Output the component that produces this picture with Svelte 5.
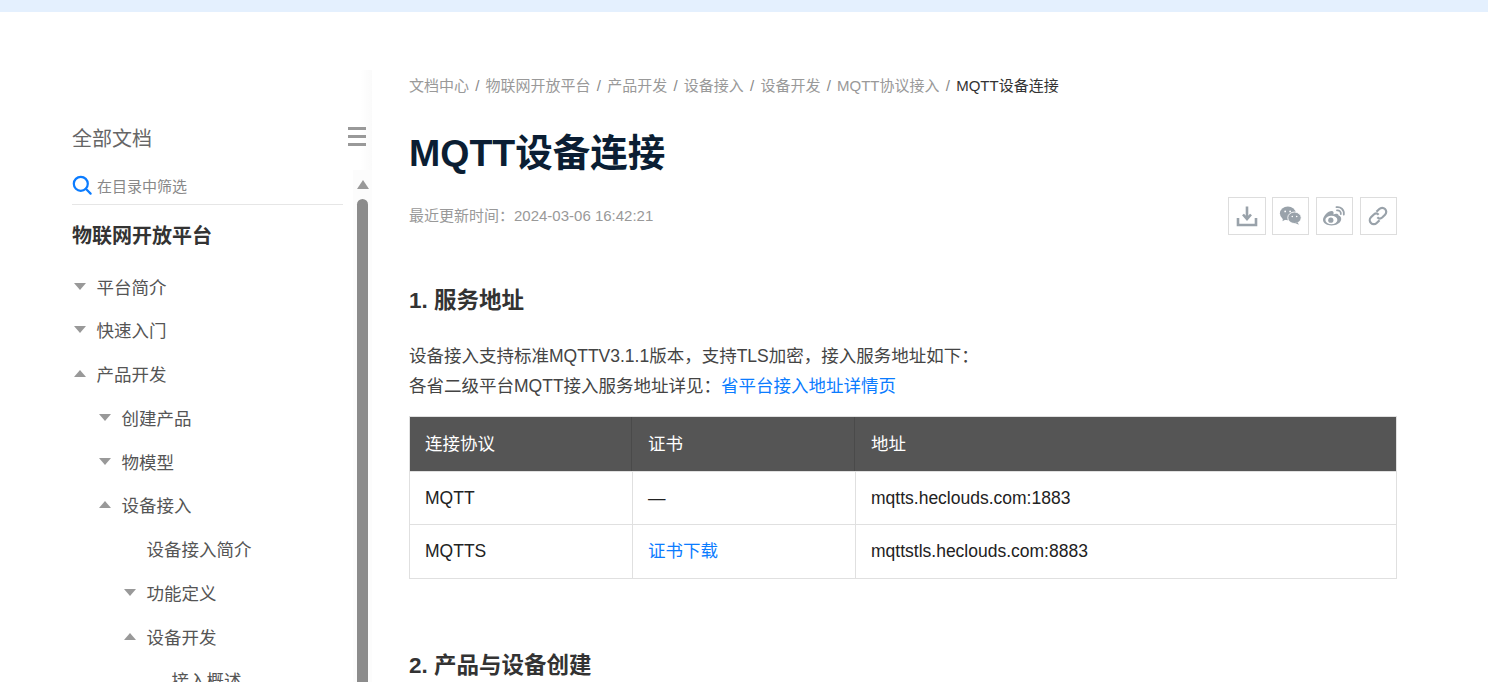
<script lang="ts">
  // sidebar tree: depth drives the indent, open = null means a leaf
  const tree = [
    { label: '平台简介', depth: 0, open: false },
    { label: '快速入门', depth: 0, open: false },
    { label: '产品开发', depth: 0, open: true },
    { label: '创建产品', depth: 1, open: false },
    { label: '物模型', depth: 1, open: false },
    { label: '设备接入', depth: 1, open: true },
    { label: '设备接入简介', depth: 2, open: null },
    { label: '功能定义', depth: 2, open: false },
    { label: '设备开发', depth: 2, open: true },
    { label: '接入概述', depth: 3, open: null }
  ];

  const crumbs = ['文档中心', '物联网开放平台', '产品开发', '设备接入', '设备开发', 'MQTT协议接入'];
</script>

<div class="topbar"></div>

<div class="page">
  <aside class="sidebar">
    <div class="side-head">
      <span class="side-title">全部文档</span>
      <span class="menu-icon"><i></i><i></i><i></i></span>
    </div>
    <div class="side-body">
      <div class="side-content">
        <div class="search">
          <svg width="20" height="20" viewBox="0 0 20 20" fill="none" stroke="#0b7cff" stroke-width="2.2">
            <circle cx="8.8" cy="8.8" r="7" />
            <path d="M13.8 13.8 L18.6 18.6" stroke-linecap="round" />
          </svg>
          <span>在目录中筛选</span>
        </div>
        <div class="platform">物联网开放平台</div>
        <ul class="tree">
          {#each tree as item}
            <li style="padding-left: {item.depth * 25}px">
              {#if item.open !== null}
                <span class="arrow" class:up={item.open}></span>
              {:else}
                <span class="arrow blank"></span>
              {/if}
              {item.label}
            </li>
          {/each}
        </ul>
      </div>
      <div class="scroll">
        <span class="scroll-up"></span>
        <span class="scroll-thumb"></span>
      </div>
    </div>
  </aside>

  <main class="content">
    <nav class="crumbs">
      {#each crumbs as c}
        <span>{c}</span><span class="sep">/</span>
      {/each}
      <span class="current">MQTT设备连接</span>
    </nav>

    <h1>MQTT设备连接</h1>

    <div class="meta">
      <span class="updated">最近更新时间：2024-03-06 16:42:21</span>
      <div class="actions">
        <button aria-label="下载">
          <svg width="22" height="22" viewBox="0 0 22 22" fill="none" stroke="#99a2aa" stroke-width="2.6">
            <path d="M11 1.5 V14 M7 9.5 L11 14 L15 9.5" />
            <path d="M2 13 V20 H20 V13" />
          </svg>
        </button>
        <button aria-label="微信">
          <svg width="23" height="20" viewBox="0 0 26 22" fill="#99a2aa">
            <ellipse cx="10" cy="8" rx="9" ry="7.8" />
            <path d="M4.5 13 L4 17 L9 14 Z" />
            <ellipse cx="17.5" cy="13" rx="7.6" ry="6.5" stroke="#fff" stroke-width="1" />
            <path d="M21 18 L22.5 21 L18 19 Z" />
            <circle cx="7" cy="5.8" r="1" fill="#fff" />
            <circle cx="12.6" cy="5.8" r="1" fill="#fff" />
            <circle cx="15" cy="11.5" r="0.9" fill="#fff" />
            <circle cx="20" cy="11.5" r="0.9" fill="#fff" />
          </svg>
        </button>
        <button aria-label="微博">
          <svg width="24" height="22" viewBox="0 0 24 22" fill="#99a2aa">
            <path d="M9.5 20.5 C4.5 20.5 1 18 1 14.8 C1 11.2 6 6 9.6 6 C11.6 6 11.9 7.6 11.4 9.4 C13.8 8.4 16.6 8.6 16.6 10.6 C18.4 11.2 19.2 12.4 19.2 14 C19.2 17.6 14.6 20.5 9.5 20.5 Z" />
            <ellipse cx="9.4" cy="15" rx="6" ry="4.2" fill="#fff" />
            <circle cx="8.8" cy="15.2" r="2.6" />
            <path d="M14.5 2.2 C18.5 1.4 22.5 4.6 21.8 9.6 M15 5.4 C17 5 19.2 6.6 18.8 9" fill="none" stroke="#99a2aa" stroke-width="1.8" stroke-linecap="round" />
          </svg>
        </button>
        <button aria-label="复制链接">
          <svg width="22" height="22" viewBox="0 0 20 20" fill="none" stroke="#99a2aa" stroke-width="2">
            <path d="M8.6 6.2 L11.2 3.6 A3.2 3.2 0 0 1 16.4 8.8 L13.8 11.4 A3.2 3.2 0 0 1 9.4 11.2" />
            <path d="M11.4 13.8 L8.8 16.4 A3.2 3.2 0 0 1 3.6 11.2 L6.2 8.6 A3.2 3.2 0 0 1 10.6 8.8" />
          </svg>
        </button>
      </div>
    </div>

    <h2>1. 服务地址</h2>
    <p>
      设备接入支持标准MQTTV3.1.1版本，支持TLS加密，接入服务地址如下：<br />
      各省二级平台MQTT接入服务地址详见：<a href="#top">省平台接入地址详情页</a>
    </p>

    <table>
      <thead>
        <tr><th>连接协议</th><th>证书</th><th>地址</th></tr>
      </thead>
      <tbody>
        <tr><td>MQTT</td><td>—</td><td>mqtts.heclouds.com:1883</td></tr>
        <tr class="last"><td>MQTTS</td><td><a href="#top">证书下载</a></td><td>mqttstls.heclouds.com:8883</td></tr>
      </tbody>
    </table>

    <h2 class="second">2. 产品与设备创建</h2>
  </main>
</div>

<style>
  :global(html), :global(body) {
    margin: 0;
    height: 682px;
    overflow: hidden;
    background: #fff;
  }

  .topbar {
    height: 12px;
    background: #e4f0fe;
  }

  .page {
    display: flex;
    height: 670px;
    overflow: hidden;
    font-family: "Liberation Sans", "Noto Sans CJK SC", sans-serif;
    color: #333;
  }

  /* Sidebar */
  .sidebar {
    flex: none;
    width: 372px;
    box-sizing: border-box;
    padding: 58px 0 0 72px;
  }

  .side-head {
    display: flex;
    justify-content: space-between;
    align-items: center;
    height: 100px;
    padding: 0 6px 0 0;
    background: linear-gradient(to right, rgba(0, 0, 0, 0) 288px, rgba(0, 0, 0, 0.018) 300px);
  }

  .side-title {
    font-size: 20px;
    color: #666;
    padding-top: 34px;
  }

  .menu-icon {
    display: flex;
    flex-direction: column;
    gap: 5px;
    width: 18px;
    margin-top: 33px;
  }

  .menu-icon i {
    display: block;
    height: 3px;
    background: #999;
  }

  .side-body {
    display: flex;
    justify-content: space-between;
  }

  .side-content {
    width: 271px;
  }

  .search {
    display: flex;
    align-items: center;
    gap: 5px;
    height: 44px;
    margin-top: -10px;
    border-bottom: 1px solid #e6e6e6;
    font-size: 15px;
    color: #888;
  }

  .search svg {
    margin-top: 5px;
  }

  .search span {
    padding-top: 6px;
  }

  .platform {
    margin-top: 17px;
    font-size: 20px;
    line-height: 28px;
    font-weight: 700;
    color: #333;
  }

  .tree {
    list-style: none;
    margin: 14.25px 0 0;
    padding: 0;
  }

  .tree li {
    display: flex;
    align-items: center;
    height: 43.75px;
    font-size: 17.5px;
    color: #555;
  }

  .arrow {
    flex: none;
    width: 0;
    height: 0;
    margin: 0 10.5px 0 2px;
    border-left: 6.5px solid transparent;
    border-right: 6.5px solid transparent;
    border-top: 7px solid #999;
  }

  .arrow.up {
    border-top: none;
    border-bottom: 7px solid #999;
  }

  .arrow.blank {
    border-color: transparent;
  }

  .scroll {
    flex: none;
    width: 19px;
    display: flex;
    flex-direction: column;
    align-items: center;
    background: #fcfcfc;
  }

  .scroll-up {
    width: 0;
    height: 0;
    margin-top: 10px;
    border-left: 6.5px solid transparent;
    border-right: 6.5px solid transparent;
    border-bottom: 9px solid #999;
  }

  .scroll-thumb {
    width: 11px;
    height: 600px;
    margin-top: 10px;
    border-radius: 6px 6px 0 0;
    background: #8c8c8c;
  }

  /* Article */
  .content {
    flex: none;
    width: 988px;
    margin-left: 37px;
  }

  .crumbs {
    display: flex;
    margin-top: 64px;
    font-size: 15px;
    line-height: 20px;
    color: #999;
  }

  .sep {
    width: 16.6px;
    text-align: center;
    color: #888;
  }

  .current {
    color: #333;
  }

  h1 {
    margin: 29px 0 0;
    font-size: 37.5px;
    line-height: 56px;
    font-weight: 700;
    color: #0b1e33;
  }

  .meta {
    display: flex;
    justify-content: space-between;
    align-items: center;
    margin-top: 16px;
    height: 38px;
    font-size: 15px;
    color: #999;
  }

  .updated {
    padding-bottom: 3px;
  }

  .actions {
    display: flex;
    gap: 6.33px;
  }

  .actions button {
    display: flex;
    align-items: center;
    justify-content: center;
    width: 37.5px;
    height: 38px;
    padding: 0;
    box-sizing: border-box;
    background: #fff;
    border: 1px solid #ddd;
  }

  h2 {
    margin: 48px 0 0;
    font-size: 22.5px;
    line-height: 36px;
    font-weight: 700;
    color: #333;
  }

  p {
    margin: 22px 0 0;
    font-size: 17.5px;
    line-height: 30px;
    color: #444;
  }

  a {
    color: #0b7cff;
    text-decoration: none;
  }

  table {
    width: 988px;
    margin-top: 15px;
    border-collapse: collapse;
    table-layout: fixed;
    font-size: 17.5px;
    line-height: 24px;
  }

  th, td {
    padding: 0 15px;
    height: 53px;
    box-sizing: border-box;
    text-align: left;
    font-weight: 400;
    border: 1px solid #e0e0e0;
    color: #222;
  }

  th:nth-child(1), th:nth-child(2) {
    width: 223px;
  }

  th {
    height: 55px;
    background: #555;
    color: #fff;
  }

  /* dark dividers inside the header, painted so they stay under the light top line */
  th:not(:first-child) {
    border-left-color: transparent;
  }

  th:not(:last-child) {
    border-right-color: transparent;
    box-shadow: inset -1px 0 0 #4a4a4a;
  }

  .last td {
    height: 54px;
    padding-bottom: 1px;
  }

  h2.second {
    margin-top: 69px;
  }
</style>
